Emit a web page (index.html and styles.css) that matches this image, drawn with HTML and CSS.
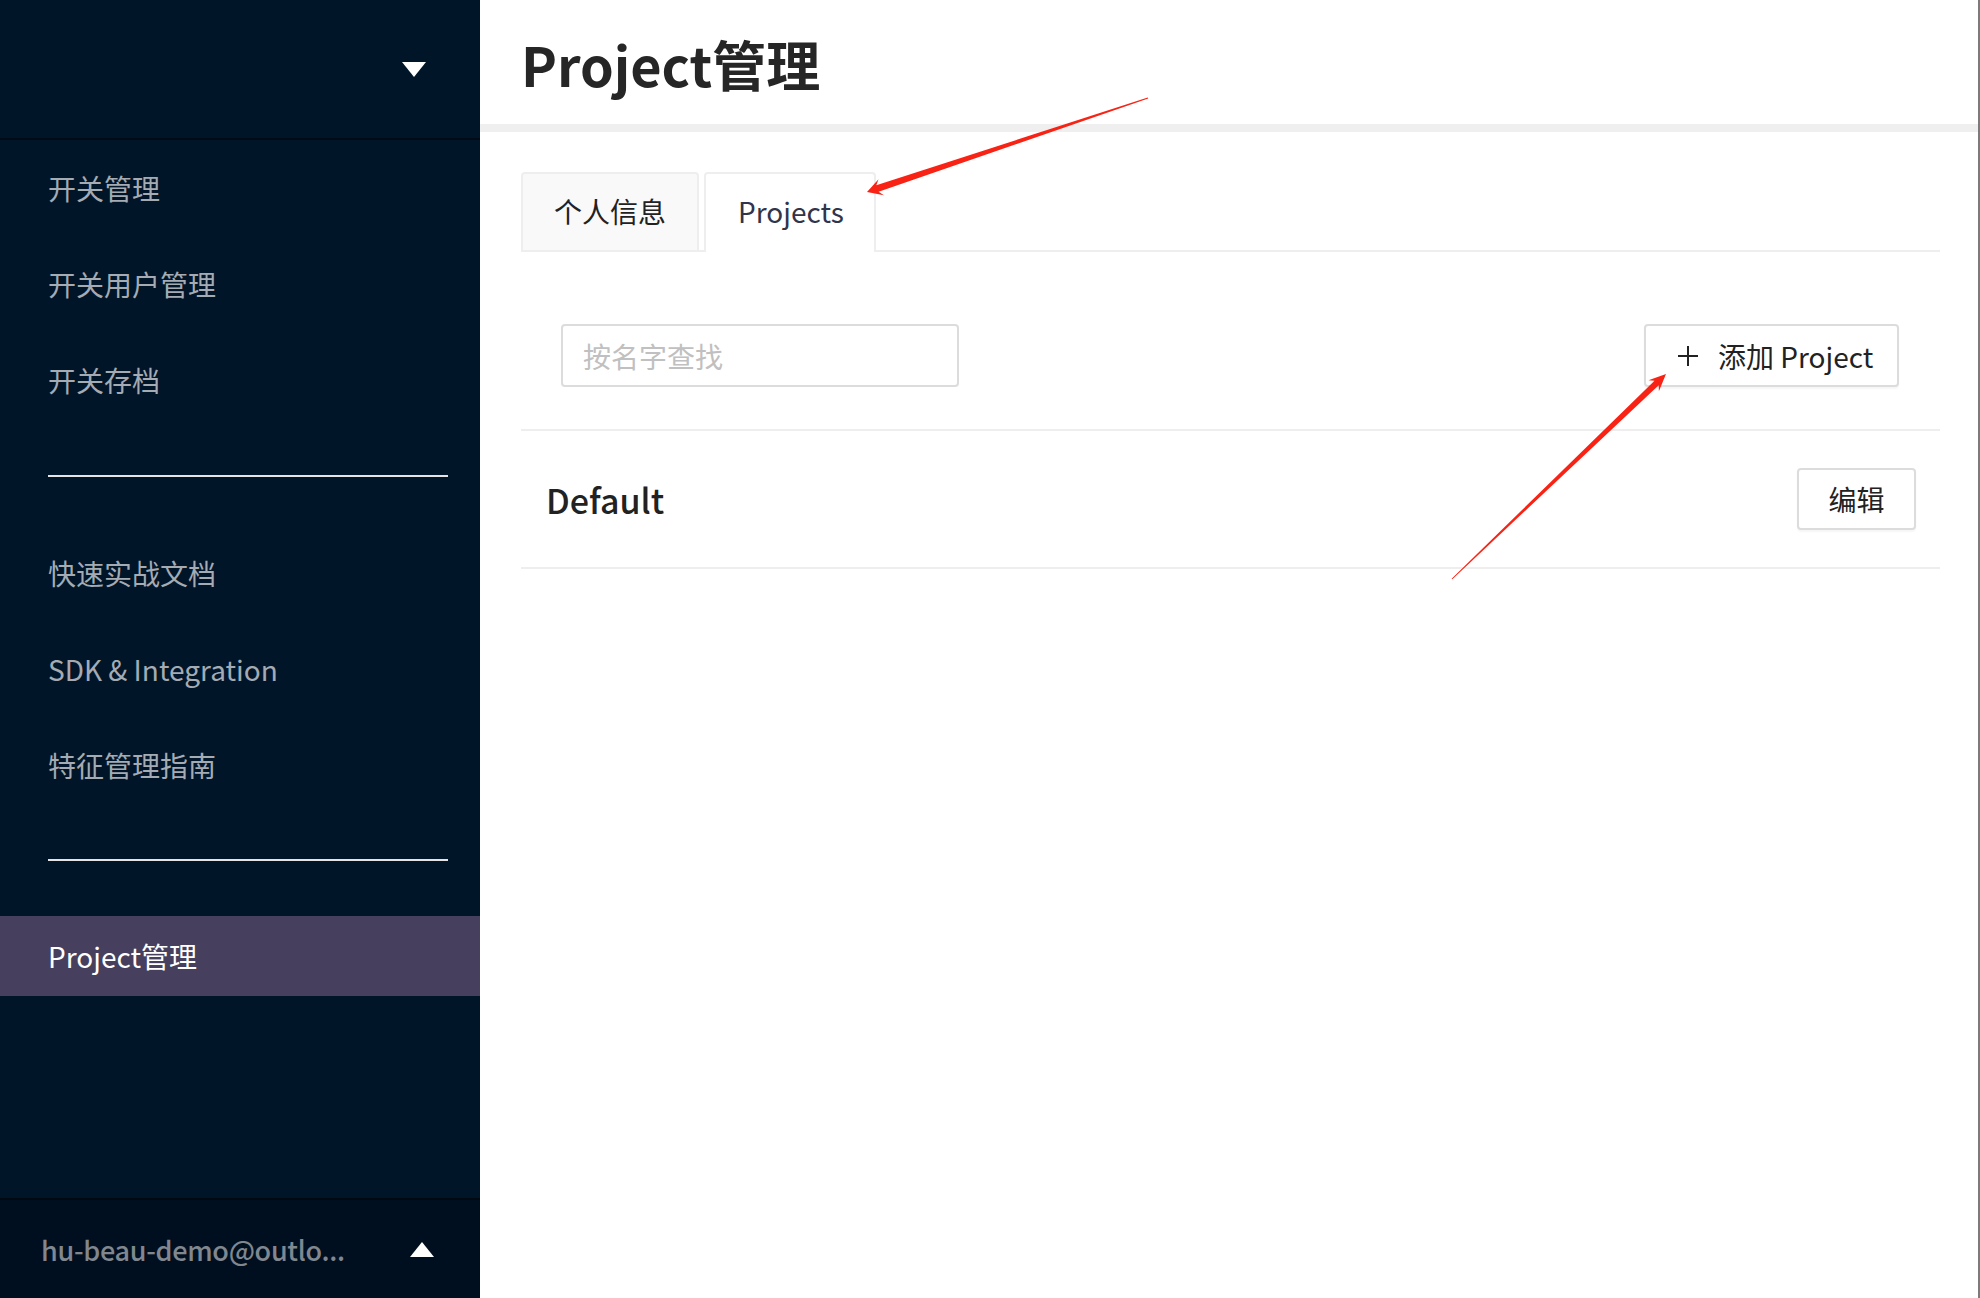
FILE: index.html
```html
<!DOCTYPE html>
<html lang="zh-CN">
<head>
<meta charset="utf-8">
<title>Project管理</title>
<link rel="stylesheet" href="styles.css">
</head>
<body>
<div class="app">
  <aside class="sidebar">
    <div class="side-head"><span class="caret-down"></span></div>
    <nav class="menu">
      <a class="menu-item">开关管理</a>
      <a class="menu-item">开关用户管理</a>
      <a class="menu-item">开关存档</a>
      <div class="menu-divider first"></div>
      <a class="menu-item">快速实战文档</a>
      <a class="menu-item">SDK &amp; Integration</a>
      <a class="menu-item">特征管理指南</a>
      <div class="menu-divider second"></div>
      <a class="menu-item active">Project管理</a>
    </nav>
    <div class="side-foot">
      <span class="user">hu-beau-demo@outlo...</span>
      <span class="caret-up"></span>
    </div>
  </aside>

  <main class="main">
    <header class="page-head">
      <h1 class="page-title">Project管理</h1>
    </header>
    <section class="content">
      <div class="tabs">
        <div class="tab">个人信息</div>
        <div class="tab active">Projects</div>
      </div>
      <div class="toolbar">
        <input class="search" type="text" placeholder="按名字查找">
        <button class="btn add-btn">
          <svg class="plus" width="22" height="22" viewBox="0 0 22 22"><path d="M11 1v20M1 11h20" stroke="#222" stroke-width="2" fill="none"/></svg>
          <span>添加 Project</span>
        </button>
      </div>
      <div class="project-row">
        <span class="project-name">Default</span>
        <button class="btn edit-btn">编辑</button>
      </div>
    </section>
  </main>

  <svg class="annotations" width="1980" height="1298" viewBox="0 0 1980 1298">
    <polygon fill="#f82314" points="867,192 883.9,195.3 878.6,191.8 1148.2,98.5 1147.8,97.5 876.3,185.2 878.5,179.2"/>
    <polygon fill="#f82314" points="1666,374 1658.9,391.2 1658.7,385.2 1452.35,579.36 1451.65,578.64 1654.5,380.8 1648.5,380.3"/>
  </svg>
</div>
</body>
</html>
```

FILE: styles.css
```css
* { box-sizing: border-box; }

html, body {
  margin: 0;
  padding: 0;
  background: #fff;
}

body {
  font-family: "Noto Sans CJK SC", "Noto Sans", sans-serif;
  color: #222;
}

.app {
  position: relative;
  display: flex;
  width: 1980px;
  height: 1298px;
  overflow: hidden;
}

/* ---------- sidebar ---------- */
.sidebar {
  width: 480px;
  flex: 0 0 480px;
  background: #011529;
  display: flex;
  flex-direction: column;
}

.side-head {
  height: 140px;
  border-bottom: 2px solid #000b17;
  display: flex;
  align-items: center;
  justify-content: flex-end;
  padding-right: 54px;
}

.caret-down {
  width: 0;
  height: 0;
  border-left: 12px solid transparent;
  border-right: 12px solid transparent;
  border-top: 15px solid #fff;
}

.menu {
  display: flex;
  flex-direction: column;
}

.menu-item {
  display: block;
  height: 96px;
  line-height: 96px;
  padding-left: 48px;
  font-size: 28px;
  color: #a4abb3;
  white-space: nowrap;
}

.menu-item.active {
  height: 80px;
  line-height: 80px;
  background: #463f5d;
  color: #fff;
}

.menu-divider {
  height: 2px;
  background: #e4e4e4;
  margin-left: 48px;
  margin-right: 32px;
}

.menu-divider.first {
  margin-top: 47px;
  margin-bottom: 48px;
}

.menu-divider.second {
  margin-top: 46px;
  margin-bottom: 55px;
}

.side-foot {
  margin-top: auto;
  height: 100px;
  border-top: 2px solid #000811;
  background: #000f1f;
  display: flex;
  align-items: center;
  padding-left: 41px;
  padding-right: 46px;
}

.user {
  flex: 1;
  font-size: 27px;
  font-weight: 500;
  letter-spacing: -0.3px;
  color: #80878f;
  white-space: nowrap;
}

.caret-up {
  width: 0;
  height: 0;
  border-left: 12px solid transparent;
  border-right: 12px solid transparent;
  border-bottom: 15px solid #fff;
}

/* ---------- main ---------- */
.main {
  flex: 1;
  display: flex;
  flex-direction: column;
  border-right: 2px solid #7b7b7b;
}

.page-head {
  height: 132px;
  border-bottom: 8px solid #efefef;
  padding-left: 41px;
  padding-top: 26px;
}

.page-title {
  margin: 0;
  font-size: 54px;
  line-height: 76px;
  font-weight: 700;
  color: #262626;
}

.content {
  padding: 40px 38px 0 41px;
}

.tabs {
  display: flex;
  align-items: flex-end;
  gap: 5px;
  border-bottom: 2px solid #eee;
  height: 80px;
}

.tab {
  height: 78px;
  padding: 0 31px;
  border: 2px solid #eee;
  border-bottom: none;
  border-radius: 4px 4px 0 0;
  background: #f9f9f9;
  font-size: 28px;
  line-height: 74px;
  color: #222;
  white-space: nowrap;
}

.tab.active {
  height: 80px;
  margin-bottom: -2px;
  padding: 0 30px 0 32px;
  background: #fff;
  color: #31344a;
}

.toolbar {
  display: flex;
  align-items: center;
  justify-content: space-between;
  padding: 72px 41px 42px 40px;
  border-bottom: 2px solid #eee;
}

.search {
  width: 398px;
  height: 63px;
  border: 2px solid #dcdcdc;
  border-radius: 4px;
  padding: 0 20px;
  font-family: inherit;
  font-size: 28px;
  color: #222;
  outline: none;
}

.search::placeholder {
  color: #c0c0c0;
}

.btn {
  background: #fff;
  border: 2px solid #dcdcdc;
  border-radius: 4px;
  box-shadow: 0 2px 2px rgba(0, 0, 0, 0.04);
  font-family: inherit;
  font-size: 28px;
  color: #222;
  cursor: pointer;
}

.add-btn {
  width: 255px;
  height: 63px;
  display: flex;
  align-items: center;
  padding: 0 0 0 31px;
  gap: 19px;
}

.plus {
  flex: 0 0 22px;
}

.project-row {
  height: 138px;
  display: flex;
  align-items: center;
  justify-content: space-between;
  padding: 0 24px 0 25px;
  border-bottom: 2px solid #eee;
}

.project-name {
  font-size: 34px;
  font-weight: 500;
  color: #222;
}

.edit-btn {
  width: 119px;
  height: 62px;
  padding: 0;
}

/* ---------- annotation overlay ---------- */
.annotations {
  position: absolute;
  left: 0;
  top: 0;
  pointer-events: none;
}
```
